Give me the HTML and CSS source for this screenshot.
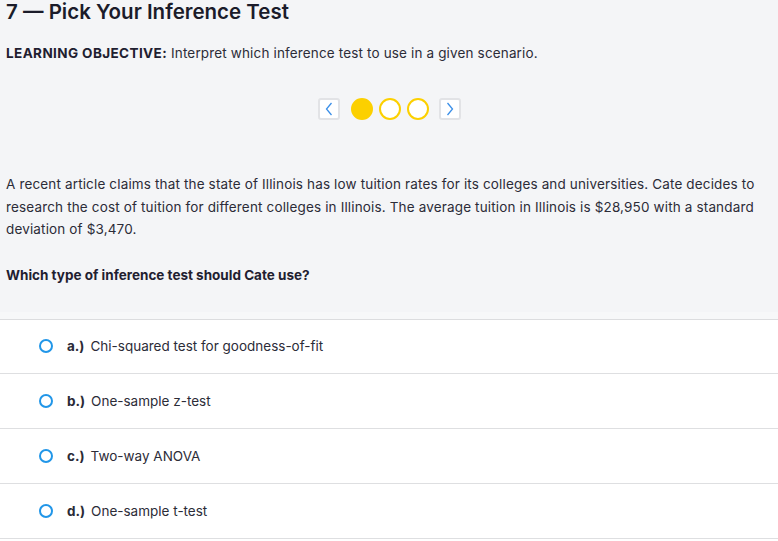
FILE: index.html
```html
<!DOCTYPE html>
<html>
<head>
<meta charset="utf-8">
<link rel="stylesheet" href="styles.css">
</head>
<body>
<section class="prompt">
  <h1 class="title">7 — Pick Your Inference Test</h1>
  <p class="objective"><strong>LEARNING OBJECTIVE:</strong> Interpret which inference test to use in a given scenario.</p>
  <nav class="pager">
    <button class="pager-btn" aria-label="Previous">
      <svg width="10" height="14" viewBox="0 0 10 14"><path d="M7.5 1 L2.5 7 L7.5 13" fill="none" stroke="#3b8fe8" stroke-width="1.3"/></svg>
    </button>
    <span class="dots">
      <span class="dot dot-active"></span>
      <span class="dot"></span>
      <span class="dot"></span>
    </span>
    <button class="pager-btn" aria-label="Next">
      <svg width="10" height="14" viewBox="0 0 10 14"><path d="M2.5 1 L7.5 7 L2.5 13" fill="none" stroke="#3b8fe8" stroke-width="1.3"/></svg>
    </button>
  </nav>
  <p class="stem">A recent article claims that the state of Illinois has low tuition rates for its colleges and universities. Cate decides to research the cost of tuition for different colleges in Illinois. The average tuition in Illinois is $28,950 with a standard deviation of $3,470.</p>
  <p class="question">Which type of inference test should Cate use?</p>
</section>
<ul class="options">
  <li class="option"><span class="radio"></span><span class="letter">a.)</span><span class="answer">Chi-squared test for goodness-of-fit</span></li>
  <li class="option"><span class="radio"></span><span class="letter">b.)</span><span class="answer">One-sample z-test</span></li>
  <li class="option"><span class="radio"></span><span class="letter">c.)</span><span class="answer">Two-way ANOVA</span></li>
  <li class="option"><span class="radio"></span><span class="letter">d.)</span><span class="answer">One-sample t-test</span></li>
</ul>
</body>
</html>
```
FILE: styles.css
```css
html, body {
  margin: 0;
  padding: 0;
  background: #ffffff;
}
body {
  font-family: Inter, "Liberation Sans", Arial, sans-serif;
  color: #2c2c38;
  font-size: 13.5px;
}
.prompt {
  background: #f4f5f7;
  padding: 0 6px;
  height: 312px;
  border-bottom: 7px solid #f7f8f9;
  box-shadow: 0 1px 0 #dcdddf;
}
.title {
  margin: 0;
  font-size: 20.5px;
  line-height: 24px;
  font-weight: 600;
  color: #1b1c2a;
}
.objective {
  margin: 18px 0 0;
  line-height: 22px;
  letter-spacing: 0.15px;
}
.objective strong {
  font-weight: 700;
  color: #1f2030;
  letter-spacing: 0.4px;
}
.pager {
  display: flex;
  justify-content: center;
  align-items: center;
  margin-top: 33px;
  height: 24px;
}
.pager-btn {
  width: 22px;
  height: 22px;
  padding: 0;
  border: 2px solid #e2e3e6;
  border-radius: 3px;
  background: #ffffff;
  display: flex;
  align-items: center;
  justify-content: center;
}
.dots {
  display: flex;
  gap: 6px;
  margin: 0 10px 0 11px;
}
.dot {
  width: 22px;
  height: 22px;
  box-sizing: border-box;
  border-radius: 50%;
  border: 2.5px solid #fcd000;
  background: #ffffff;
}
.dot-active {
  background: #fcd000;
}
.stem {
  margin: 52px 0 0;
  line-height: 22.5px;
  letter-spacing: 0.15px;
}
.question {
  margin: 23px 0 0;
  font-weight: 700;
  line-height: 22px;
  color: #1f2030;
}
.options {
  list-style: none;
  margin: 0;
  padding: 0;
}
.option {
  display: flex;
  align-items: center;
  height: 54px;
  border-bottom: 1px solid #dedfe1;
  padding-left: 39px;
}
.radio {
  width: 14px;
  height: 14px;
  box-sizing: border-box;
  border: 2.5px solid #2196e8;
  border-radius: 50%;
  margin-right: 14px;
}
.letter {
  font-weight: 700;
  margin-right: 6px;
  color: #2a2a36;
}
.answer {
  color: #2c2c38;
}
```
